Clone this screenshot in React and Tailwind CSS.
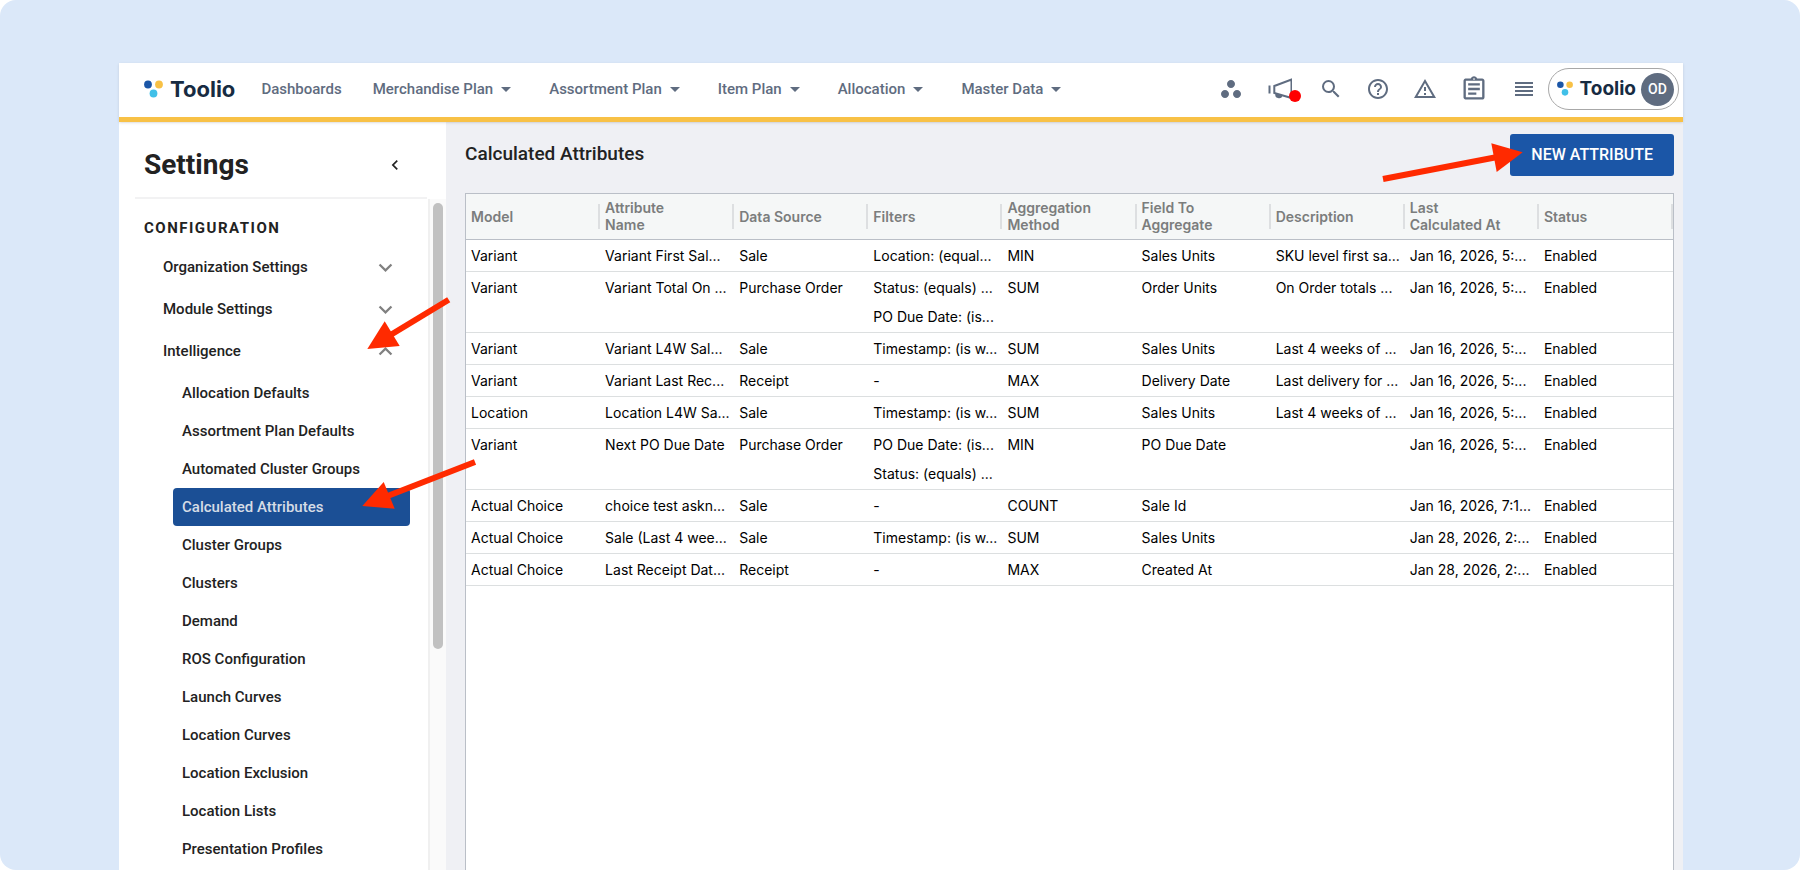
import React, { useState } from 'react';
import {
  MdArrowDropDown,
  MdSearch,
  MdHelpOutline,
  MdWorkspaces,
  MdOutlineAssignment,
  MdExpandMore,
  MdExpandLess,
  MdChevronLeft,
} from 'react-icons/md';

const navItems = [
  { label: 'Dashboards' },
  { label: 'Merchandise Plan', menu: true },
  { label: 'Assortment Plan', menu: true },
  { label: 'Item Plan', menu: true },
  { label: 'Allocation', menu: true },
  { label: 'Master Data', menu: true },
];

const intelligenceItems = [
  'Allocation Defaults',
  'Assortment Plan Defaults',
  'Automated Cluster Groups',
  'Calculated Attributes',
  'Cluster Groups',
  'Clusters',
  'Demand',
  'ROS Configuration',
  'Launch Curves',
  'Location Curves',
  'Location Exclusion',
  'Location Lists',
  'Presentation Profiles',
];

const columns = [
  'Model',
  'Attribute Name',
  'Data Source',
  'Filters',
  'Aggregation Method',
  'Field To Aggregate',
  'Description',
  'Last Calculated At',
  'Status',
];

const rows = [
  ['Variant', 'Variant First Sal...', 'Sale', ['Location: (equal...'], 'MIN', 'Sales Units', 'SKU level first sa...', 'Jan 16, 2026, 5:...', 'Enabled'],
  ['Variant', 'Variant Total On ...', 'Purchase Order', ['Status: (equals) ...', 'PO Due Date: (is...'], 'SUM', 'Order Units', 'On Order totals ...', 'Jan 16, 2026, 5:...', 'Enabled'],
  ['Variant', 'Variant L4W Sal...', 'Sale', ['Timestamp: (is w...'], 'SUM', 'Sales Units', 'Last 4 weeks of ...', 'Jan 16, 2026, 5:...', 'Enabled'],
  ['Variant', 'Variant Last Rec...', 'Receipt', ['-'], 'MAX', 'Delivery Date', 'Last delivery for ...', 'Jan 16, 2026, 5:...', 'Enabled'],
  ['Location', 'Location L4W Sa...', 'Sale', ['Timestamp: (is w...'], 'SUM', 'Sales Units', 'Last 4 weeks of ...', 'Jan 16, 2026, 5:...', 'Enabled'],
  ['Variant', 'Next PO Due Date', 'Purchase Order', ['PO Due Date: (is...', 'Status: (equals) ...'], 'MIN', 'PO Due Date', '', 'Jan 16, 2026, 5:...', 'Enabled'],
  ['Actual Choice', 'choice test askn...', 'Sale', ['-'], 'COUNT', 'Sale Id', '', 'Jan 16, 2026, 7:1...', 'Enabled'],
  ['Actual Choice', 'Sale (Last 4 wee...', 'Sale', ['Timestamp: (is w...'], 'SUM', 'Sales Units', '', 'Jan 28, 2026, 2:...', 'Enabled'],
  ['Actual Choice', 'Last Receipt Dat...', 'Receipt', ['-'], 'MAX', 'Created At', '', 'Jan 28, 2026, 2:...', 'Enabled'],
];

function Logo({ small }) {
  return (
    <span className="flex items-center gap-[7px]">
      <svg className={small ? 'size-4' : 'size-[19px]'} viewBox="0 0 19 19" aria-hidden="true">
        <circle cx="4" cy="4.500" r="3.900" fill="#1b56a7" />
        <circle cx="15" cy="4.500" r="3.900" fill="#f8c146" />
        <circle cx="9.500" cy="13.500" r="3.900" fill="#41c0e8" />
      </svg>
      <span className={`font-[Inter,sans-serif] leading-6 font-bold text-[#172b42] ${small ? 'text-[19px]' : 'text-[22px]'}`}>
        Toolio
      </span>
    </span>
  );
}

function MegaphoneIcon() {
  return (
    <svg width="26" height="26" viewBox="0 0 26 26" fill="none" stroke="currentColor" strokeWidth="2" aria-hidden="true">
      <path d="M3.500 9.500v8" />
      <path d="M8.300 10L25.500 3.500v18.500L8.300 17z" />
      <path d="M9.500 17.500a3.600 3.600 0 0 0 7 2.200z" fill="currentColor" stroke="none" />
    </svg>
  );
}

function WarningIcon() {
  return (
    <svg width="24" height="24" viewBox="0 0 24 24" fill="currentColor" aria-hidden="true">
      <path d="M12 5.990 19.530 19H4.470L12 5.990M12 2 1 21h22L12 2zm1 14h-2v2h2v-2zm0-6h-2v4h2v-4z" />
    </svg>
  );
}

function MenuLinesIcon() {
  return (
    <svg width="18" height="14" viewBox="0 0 18 14" fill="currentColor" aria-hidden="true">
      <path d="M0 0h18v2H0zM0 4h18v2H0zM0 8h18v2H0zM0 12h18v2H0z" />
    </svg>
  );
}

function TopBar() {
  return (
    <header className="relative z-10 flex h-[59px] items-center justify-between border-b-5 border-[#f8c146] bg-white pr-1 pb-0.5 pl-[25px] shadow-sm">
      <div className="flex items-center gap-[26px]">
        <a href="#home"><Logo /></a>
        <nav className="flex items-center gap-[31px] text-[15px] leading-6 font-medium text-[#5f6c80]">
          {navItems.map((item) =>
            item.menu ? (
              <button key={item.label} type="button" className="flex items-center gap-px">
                {item.label}
                <MdArrowDropDown className="size-6" />
              </button>
            ) : (
              <a key={item.label} href="#dashboards">{item.label}</a>
            )
          )}
        </nav>
      </div>

      <div className="flex items-center text-[#5f6c80]">
        <div className="flex items-center gap-[23px] pr-[11px]">
          <button type="button" aria-label="Workspaces"><MdWorkspaces className="size-6" /></button>
          <button type="button" aria-label="Announcements" className="relative pr-1">
            <MegaphoneIcon />
            <span className="absolute right-[-5px] bottom-0 size-3 rounded-full bg-[#ff0000]"></span>
          </button>
          <button type="button" aria-label="Search"><MdSearch className="size-6" /></button>
          <button type="button" aria-label="Help"><MdHelpOutline className="size-6" /></button>
          <button type="button" aria-label="Alerts"><WarningIcon /></button>
          <button type="button" aria-label="Tasks"><MdOutlineAssignment className="size-7" /></button>
          <button type="button" aria-label="Menu" className="px-1"><MenuLinesIcon /></button>
        </div>
        <button type="button" className="flex h-[42px] items-center gap-[5px] rounded-full border border-[#a8a8a8] pr-1 pl-2">
          <Logo small />
          <span className="flex size-[33px] items-center justify-center rounded-full bg-[#5f6c80] text-[14px] font-medium text-white">OD</span>
        </button>
      </div>
    </header>
  );
}

function Sidebar() {
  const [selected, setSelected] = useState('Calculated Attributes');

  return (
    <aside className="flex w-[327px] shrink-0 flex-col bg-white text-[#222222]">
      <div className="mr-[19px] ml-4 flex h-[77px] items-center justify-between border-b-2 border-[#f2f2f3] pt-2.5 pr-[22px] pl-[9px]">
        <h1 className="text-[28px] leading-9 font-bold">Settings</h1>
        <button type="button" aria-label="Collapse settings"><MdChevronLeft className="size-5" /></button>
      </div>

      <div className="flex min-h-0 flex-1">
        <div className="min-w-0 flex-1 overflow-hidden">
          <h2 className="mt-[17px] pl-[25px] text-[15px] leading-6 font-bold tracking-widest">CONFIGURATION</h2>
          <ul className="mt-1.5 text-[15px] font-medium">
            {['Organization Settings', 'Module Settings', 'Intelligence'].map((group) => (
              <li key={group}>
                <button type="button" className="flex h-[42px] w-full items-center justify-between pr-[29px] pl-11">
                  {group}
                  {group === 'Intelligence' ? (
                    <MdExpandLess className="size-[27px] text-[#808080]" />
                  ) : (
                    <MdExpandMore className="size-[27px] text-[#808080]" />
                  )}
                </button>
              </li>
            ))}
          </ul>
          <ul className="mt-0.5 mr-[18px] ml-[54px] text-[15px] font-medium">
            {intelligenceItems.map((item) => (
              <li key={item}>
                <a
                  href="#settings"
                  onClick={() => setSelected(item)}
                  className={
                    item === selected
                      ? 'flex h-[38px] items-center rounded-sm bg-[#1b4f95] px-[9px] text-[#d5dce6]'
                      : 'flex h-[38px] items-center rounded-sm px-[9px]'
                  }
                >
                  {item}
                </a>
              </li>
            ))}
          </ul>
        </div>
        <div className="w-[18px] shrink-0 border-l-2 border-[#f0f0f0] bg-[#fafafa] px-[3px] pt-1">
          <div className="h-[446px] w-2.5 rounded-full bg-[#c1c1c1]"></div>
        </div>
      </div>
    </aside>
  );
}

function AttributeTable() {
  return (
    <div className="flex-1 border border-b-0 border-[#babfc7] bg-white font-[Inter,sans-serif]">
      <table className="w-full table-fixed border-collapse text-left text-[14px]">
        <thead>
          <tr className="h-[45px] border-b border-[#babfc7] bg-[#f5f7f7] text-[#7b7d7d]">
            {columns.map((col) => (
              <th key={col} scope="col" className="p-0 align-middle leading-[17px] font-semibold">
                <div className="flex items-center justify-between pl-[5px]">
                  <span className="max-w-[100px]">{col}</span>
                  <span className="h-[25px] w-0.5 bg-[#dddfe1]"></span>
                </div>
              </th>
            ))}
          </tr>
        </thead>
        <tbody>
          {rows.map((row, i) => (
            <tr key={i} className="border-b border-[#dcdfe0] text-black">
              {row.map((cell, j) => (
                <td key={j} className="py-px pr-0 pl-[5px] align-top leading-[29px] whitespace-nowrap">
                  {Array.isArray(cell) ? cell.map((line) => <div key={line}>{line}</div>) : cell}
                </td>
              ))}
            </tr>
          ))}
        </tbody>
      </table>
    </div>
  );
}

function Arrows() {
  return (
    <svg className="pointer-events-none absolute inset-0 z-20 h-full w-full" fill="#ff2a00" stroke="#ff2a00" aria-hidden="true">
      <path d="M1383 179L1500 156.500" strokeWidth="6" />
      <path d="M1522.700 152.300L1491.300 143.300L1496.700 172z" stroke="none" />
      <path d="M448.700 299.700L388 336.500" strokeWidth="6" />
      <path d="M367.300 349L384.700 321.300L399.700 346z" stroke="none" />
      <path d="M475 462L385 497" strokeWidth="6" />
      <path d="M362.300 506L383.700 482L394.700 508.700z" stroke="none" />
    </svg>
  );
}

export default function App() {
  return (
    <div className="h-screen bg-white font-[Roboto,sans-serif]">
      <div className="relative flex h-full flex-col overflow-hidden rounded-2xl bg-[#dbe8f9] pt-[63px] pr-[117px] pl-[119px]">
        <TopBar />
        <div className="flex min-h-0 flex-1">
          <Sidebar />
          <main className="flex min-w-0 flex-1 flex-col bg-[#eff0f4] pr-[9px] pl-[19px]">
            <div className="flex items-start justify-between pt-3 pb-[17px]">
              <h2 className="pt-2 text-[19px] leading-6 font-medium text-[#222222]">Calculated Attributes</h2>
              <button type="button" className="h-[42px] rounded-[3px] bg-[#1b56a7] px-[21px] text-[16px] font-medium text-white">
                NEW ATTRIBUTE
              </button>
            </div>
            <AttributeTable />
          </main>
        </div>
        <Arrows />
      </div>
    </div>
  );
}
